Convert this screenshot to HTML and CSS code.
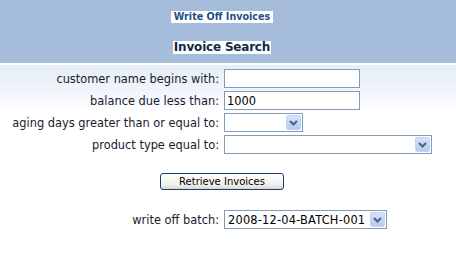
FILE: index.html
```
<!DOCTYPE html>
<html lang="en">

<head>
	<meta charset="UTF-8">
	<title>Write Off Invoices</title>
	<link rel="stylesheet" href="styles.css">
</head>

<body>
	<div class="header">
		<div class="crumb"><span>Write Off Invoices</span></div>
		<h1><span>Invoice Search</span></h1>
	</div>

	<div class="content">
		<form class="search">
			<label>customer name begins with:</label>
			<input type="text" class="text">

			<label>balance due less than:</label>
			<input type="text" class="text" value="1000">

			<label>aging days greater than or equal to:</label>
			<div class="select short">
				<span class="value"></span>
				<span class="arrow"><svg width="9" height="6" viewBox="0 0 9 6"><path d="M1 1 L4.5 4.5 L8 1" fill="none" stroke="#4d5f80" stroke-width="2"/></svg></span>
			</div>

			<label>product type equal to:</label>
			<div class="select long">
				<span class="value"></span>
				<span class="arrow"><svg width="9" height="6" viewBox="0 0 9 6"><path d="M1 1 L4.5 4.5 L8 1" fill="none" stroke="#4d5f80" stroke-width="2"/></svg></span>
			</div>
		</form>

		<div class="actions">
			<button type="button">Retrieve Invoices</button>
		</div>

		<div class="search batch">
			<label>write off batch:</label>
			<div class="select">
				<span class="value">2008-12-04-BATCH-001</span>
				<span class="arrow"><svg width="9" height="6" viewBox="0 0 9 6"><path d="M1 1 L4.5 4.5 L8 1" fill="none" stroke="#4d5f80" stroke-width="2"/></svg></span>
			</div>
		</div>
	</div>
</body>

</html>
```

FILE: styles.css
```
* {
	margin: 0;
	padding: 0;
	box-sizing: border-box;
}

html,
body {
	height: 100%;
	background: #fff;
	font-family: Tahoma, 'DejaVu Sans', Verdana, sans-serif;
	font-size: 11.4px;
	color: #1a1a2e;
}

.header {
	height: 65px;
	background: #a5bdda;
	border-bottom: 2px solid #fff;
	text-align: center;
	padding: 9px 12px 0 0;
}

.crumb span {
	display: inline-block;
	background: #fff;
	color: #1f4f86;
	font-weight: bold;
	font-size: 9.6px;
	line-height: 12px;
	padding: 0 3px;
}

h1 {
	margin-top: 18px;
	font-size: 12px;
	line-height: 13px;
	letter-spacing: -0.2px;
}

h1 span {
	display: inline-block;
	background: #fff;
	color: #0e2a48;
	padding: 0 1px;
}

.content {
	background: linear-gradient(#e5edf7, #f4f7fc 30px, #fff 46px);
	padding-top: 4px;
	height: calc(100% - 67px);
}

.search {
	display: grid;
	grid-template-columns: 219px max-content;
	column-gap: 5px;
	row-gap: 3px;
	align-items: center;
}

.search label {
	text-align: right;
	white-space: nowrap;
}

.text {
	width: 136px;
	height: 19px;
	border: 1px solid #7f9db9;
	padding: 0 2px;
	font: inherit;
	color: #000;
	background: #fff;
	outline: 0;
}

.select {
	display: flex;
	align-items: center;
	justify-content: space-between;
	height: 19px;
	border: 1px solid #7f9db9;
	background: #fff;
	padding: 0 1px 0 3px;
	color: #000;
}

.select.short {
	width: 79px;
}

.select.long {
	width: 208px;
}

.value {
	white-space: nowrap;
	padding-right: 5px;
	letter-spacing: 0.2px;
}

.arrow {
	display: flex;
	align-items: center;
	justify-content: center;
	width: 15px;
	height: 15px;
	border: 1px solid #c3d3f5;
	border-radius: 2px;
	background: linear-gradient(#d6e1fb, #b7caf3);
}

.actions {
	padding: 19px 0 0 160px;
}

button {
	width: 124px;
	height: 17px;
	border: 1px solid #1c3e6c;
	border-radius: 3px;
	background: linear-gradient(#fff, #f2f1ec 70%, #d9d7cd);
	font: inherit;
	font-size: 10px;
	color: #000;
	line-height: 13px;
}

.batch {
	margin-top: 20px;
}
```
